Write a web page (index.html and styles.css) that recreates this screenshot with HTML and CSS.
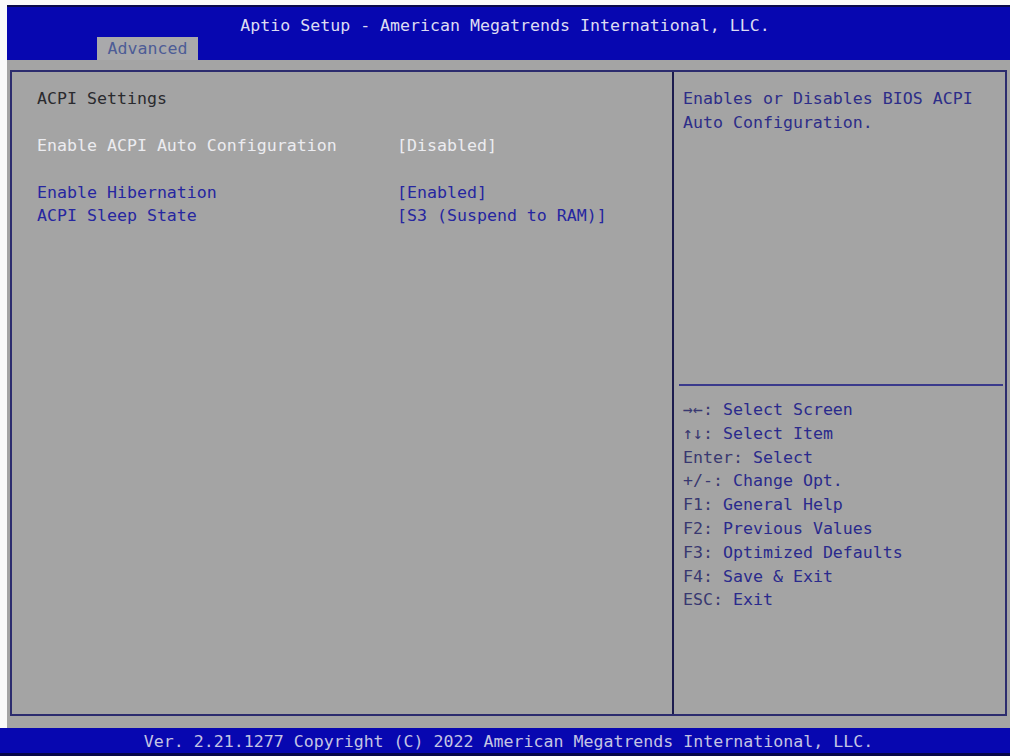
FILE: index.html
```html
<!DOCTYPE html>
<html lang="en">
<head>
  <meta charset="UTF-8">
  <title>Aptio Setup - Advanced</title>
  <link rel="stylesheet" href="styles.css">
</head>
<body>
  <div class="screen">
    <header class="top">
      <div class="title">Aptio Setup - American Megatrends International, LLC.</div>
      <div class="tab">Advanced</div>
    </header>

    <main class="body">
      <div class="frame">
        <section class="menu">
          <div class="row heading">ACPI Settings</div>
          <div class="row gap"></div>
          <div class="row item off"><span class="label">Enable ACPI Auto Configuration</span><span class="value">[Disabled]</span></div>
          <div class="row gap"></div>
          <div class="row item"><span class="label">Enable Hibernation</span><span class="value">[Enabled]</span></div>
          <div class="row item"><span class="label">ACPI Sleep State</span><span class="value">[S3 (Suspend to RAM)]</span></div>
        </section>

        <aside class="side">
          <div class="help">
            <div>Enables or Disables BIOS ACPI</div>
            <div>Auto Configuration.</div>
          </div>
          <div class="keys">
            <div><b>&rarr;&larr;:</b> Select Screen</div>
            <div><b>&uarr;&darr;:</b> Select Item</div>
            <div><b>Enter:</b> Select</div>
            <div><b>+/-:</b> Change Opt.</div>
            <div><b>F1:</b> General Help</div>
            <div><b>F2:</b> Previous Values</div>
            <div><b>F3:</b> Optimized Defaults</div>
            <div><b>F4:</b> Save &amp; Exit</div>
            <div><b>ESC:</b> Exit</div>
          </div>
        </aside>
      </div>
    </main>

    <footer class="bottom">Ver. 2.21.1277 Copyright (C) 2022 American Megatrends International, LLC.</footer>
  </div>
</body>
</html>
```

FILE: styles.css
```css
body { margin: 0; background: #fafafa; font-family: "DejaVu Sans Mono", "Liberation Mono", monospace; font-size: 16.6px; line-height: 23.5px; }
.screen { margin: 5px 0 0 7px; height: 751px; display: flex; flex-direction: column; background: #a4a4a4; }

.top { height: 53px; background: #0707b0; border-top: 2px solid #0a0a4a; display: flex; flex-direction: column; }
.title { color: #dcdcf2; text-align: center; padding-top: 7px; height: 23px; margin-left: -7px; }
.tab { margin-top: auto; margin-left: 90px; width: 101px; height: 23px; background: #a9a9ab; color: #4d5c96; text-align: center; line-height: 24px; }

.body { flex: 1; padding: 10px 3px 12px 3px; }
.frame { height: 100%; box-sizing: border-box; border: 2px solid #2c2c6e; display: flex; }

.menu { width: 662px; border-right: 2px solid #1c1c4e; padding: 15px 0 0 25px; box-sizing: border-box; }
.row { height: 23.4px; display: flex; }
.heading { color: #2a2a2e; }
.item { color: #2626a0; }
.item.off { color: #ececf0; }
.label { width: 360px; }

.side { flex: 1; display: flex; flex-direction: column; }
.help { height: 297px; padding: 15px 0 0 4px; color: #2d2d88; border-bottom: 2px solid #3a3a8c; margin: 0 2px 0 5px; }
.keys { padding: 12px 0 0 9px; color: #2a2a8c; line-height: 23.8px; }
.keys b { font-weight: normal; color: #383870; }

.bottom { height: 28px; background: #0707b0; color: #c4c4e4; text-align: center; line-height: 28px; margin-left: -7px; padding-left: 7px; border-bottom: 3px solid #06064a; box-sizing: border-box; }
```
